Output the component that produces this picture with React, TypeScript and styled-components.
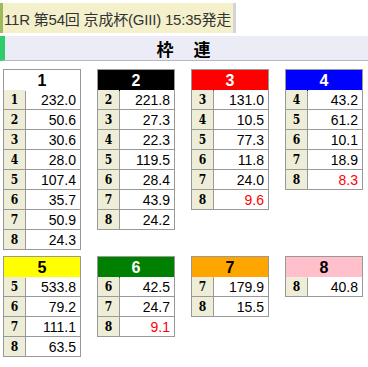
import React from "react";
import styled, { createGlobalStyle } from "styled-components";

type Cell = { n: number; v: string; low?: boolean };
type Waku = { n: number; bg: string; fg: string; rows: Cell[] };

const wakus: Waku[] = [
  {
    n: 1,
    bg: "#ffffff",
    fg: "#000000",
    rows: [
      { n: 1, v: "232.0" },
      { n: 2, v: "50.6" },
      { n: 3, v: "30.6" },
      { n: 4, v: "28.0" },
      { n: 5, v: "107.4" },
      { n: 6, v: "35.7" },
      { n: 7, v: "50.9" },
      { n: 8, v: "24.3" },
    ],
  },
  {
    n: 2,
    bg: "#000000",
    fg: "#ffffff",
    rows: [
      { n: 2, v: "221.8" },
      { n: 3, v: "27.3" },
      { n: 4, v: "22.3" },
      { n: 5, v: "119.5" },
      { n: 6, v: "28.4" },
      { n: 7, v: "43.9" },
      { n: 8, v: "24.2" },
    ],
  },
  {
    n: 3,
    bg: "#ff0000",
    fg: "#ffffff",
    rows: [
      { n: 3, v: "131.0" },
      { n: 4, v: "10.5" },
      { n: 5, v: "77.3" },
      { n: 6, v: "11.8" },
      { n: 7, v: "24.0" },
      { n: 8, v: "9.6", low: true },
    ],
  },
  {
    n: 4,
    bg: "#0000ff",
    fg: "#ffffff",
    rows: [
      { n: 4, v: "43.2" },
      { n: 5, v: "61.2" },
      { n: 6, v: "10.1" },
      { n: 7, v: "18.9" },
      { n: 8, v: "8.3", low: true },
    ],
  },
  {
    n: 5,
    bg: "#ffff00",
    fg: "#000000",
    rows: [
      { n: 5, v: "533.8" },
      { n: 6, v: "79.2" },
      { n: 7, v: "111.1" },
      { n: 8, v: "63.5" },
    ],
  },
  {
    n: 6,
    bg: "#008000",
    fg: "#ffffff",
    rows: [
      { n: 6, v: "42.5" },
      { n: 7, v: "24.7" },
      { n: 8, v: "9.1", low: true },
    ],
  },
  {
    n: 7,
    bg: "#ffa500",
    fg: "#000000",
    rows: [
      { n: 7, v: "179.9" },
      { n: 8, v: "15.5" },
    ],
  },
  {
    n: 8,
    bg: "#ffc0cb",
    fg: "#000000",
    rows: [{ n: 8, v: "40.8" }],
  },
];

const App = () => {
  return (
    <Page>
      <GlobalStyle />
      <RaceTitle>
        <TitleText>11R 第54回 京成杯(GIII) 15:35発走</TitleText>
      </RaceTitle>
      <SectionBar>
        <SectionText>枠 連</SectionText>
      </SectionBar>
      <Grid>
        {wakus.map((w) => (
          <OddsTable key={w.n}>
            <Head $bg={w.bg} $fg={w.fg}>
              {w.n}
            </Head>
            {w.rows.map((r) => (
              <React.Fragment key={r.n}>
                <Num>{r.n}</Num>
                <Odds $low={r.low}>{r.v}</Odds>
              </React.Fragment>
            ))}
          </OddsTable>
        ))}
      </Grid>
    </Page>
  );
};

export default App;

const GlobalStyle = createGlobalStyle`
  html, body {
    margin: 0;
    padding: 0;
    background: #ffffff;
  }
`;

const Page = styled.div`
  width: 368px;
  height: 367px;
  padding-top: 3px;
  box-sizing: border-box;
  font-family: "Liberation Sans", "Noto Sans CJK JP", sans-serif;
`;

const RaceTitle = styled.div`
  width: 236px;
  height: 30px;
  box-sizing: border-box;
  display: flex;
  align-items: center;
  background: #f4f0cc;
  border-left: 3px solid #9cbb5c;
  border-right: 3px solid #d4d4d4;
`;

const TitleText = styled.span`
  padding-left: 1px;
  font-size: 15px;
  letter-spacing: -0.2px;
  color: #333333;
  white-space: nowrap;
  font-family: "Liberation Sans", "Noto Sans CJK JP", sans-serif;
`;

const SectionBar = styled.div`
  margin-top: 3px;
  height: 25px;
  box-sizing: border-box;
  display: flex;
  align-items: center;
  justify-content: center;
  background: #ececf6;
  border-left: 5px solid #2ecc6a;
  border-bottom: 1px solid #b8b8c0;
`;

const SectionText = styled.span`
  font-size: 17px;
  font-weight: bold;
  color: #000000;
  letter-spacing: 8px;
  font-family: "Noto Sans CJK JP", sans-serif;
  padding-left: 2px;
`;

const Grid = styled.div`
  display: grid;
  grid-template-columns: repeat(4, 78px);
  column-gap: 16px;
  row-gap: 6px;
  align-items: start;
  padding: 8px 0 0 3px;
`;

const OddsTable = styled.div`
  display: grid;
  grid-template-columns: 21px 54px;
  grid-auto-rows: 19px;
  gap: 1px;
  padding: 1px;
  background: #999999;
`;

const Head = styled.div<{ $bg: string; $fg: string }>`
  grid-column: 1 / span 2;
  height: 21px;
  display: flex;
  align-items: center;
  justify-content: center;
  background: ${(p) => p.$bg};
  color: ${(p) => p.$fg};
  font-size: 16px;
  font-weight: bold;
`;

const Num = styled.div`
  display: flex;
  align-items: center;
  justify-content: center;
  background: #eeeed8;
  font-family: "DejaVu Serif Condensed", "DejaVu Serif", serif;
  font-weight: bold;
  font-size: 12px;
  color: #000000;
`;

const Odds = styled.div<{ $low?: boolean }>`
  display: flex;
  align-items: center;
  justify-content: flex-end;
  padding-right: 4px;
  background: #ffffff;
  font-size: 14px;
  color: ${(p) => (p.$low ? "#ff0000" : "#000000")};
`;
